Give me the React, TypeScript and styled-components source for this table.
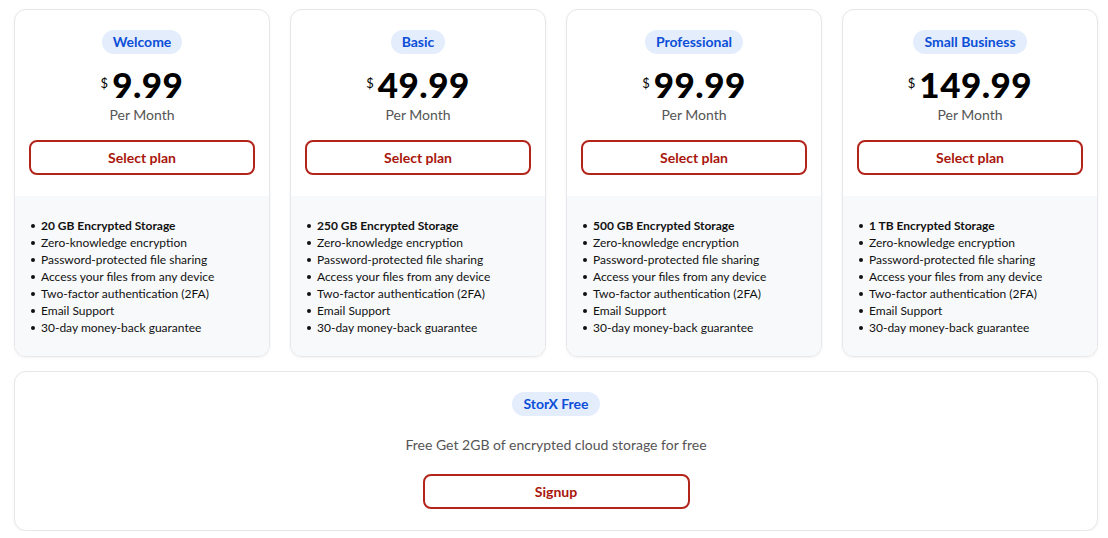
import React from "react";
import styled, { createGlobalStyle } from "styled-components";

const Global = createGlobalStyle`
  html, body { margin: 0; padding: 0; background: #ffffff; }
  body { font-family: Lato, "Noto Sans", sans-serif; color: #111; }
  * { box-sizing: border-box; }
`;

const Page = styled.div`
  width: 1108px;
  padding: 9px 10px 0 14px;
  display: flex;
  flex-direction: column;
  gap: 14px;
`;

const Grid = styled.div`
  display: grid;
  grid-template-columns: repeat(4, 256px);
  gap: 20px;
`;

const Card = styled.div`
  border: 1px solid #e6e7ea;
  border-radius: 12px;
  background: #fff;
  overflow: hidden;
  box-shadow: 0 1px 3px rgba(0, 0, 0, 0.05);
  display: flex;
  flex-direction: column;
`;

const Top = styled.div`
  padding: 20px 14px 21px;
  display: flex;
  flex-direction: column;
  align-items: center;
`;

const Badge = styled.span`
  display: inline-block;
  height: 24px;
  line-height: 24px;
  padding: 0 11px;
  border-radius: 12px;
  background: #e4edfc;
  color: #0b4fd8;
  font-size: 14px;
  font-weight: 700;
`;

const Price = styled.div`
  margin-top: 10px;
  height: 40px;
  display: flex;
  align-items: center;
  justify-content: center;
  color: #000;
`;

const Dollar = styled.span`
  font-size: 13px;
  font-weight: 400;
  align-self: flex-start;
  margin-top: 11px;
  margin-right: 4px;
`;

const Amount = styled.span`
  font-size: 35px;
  font-weight: 900;
  line-height: 40px;
  letter-spacing: 0.5px;
`;

const Period = styled.div`
  margin-top: 1px;
  line-height: 20px;
  font-size: 14px;
  color: #555;
`;

const Button = styled.button<{ $w?: string; $mt?: number }>`
  width: ${(p) => p.$w || "100%"};
  height: 35px;
  margin-top: ${(p) => p.$mt ?? 15}px;
  border: 2px solid #b3251a;
  border-radius: 8px;
  background: #fff;
  color: #a8160c;
  font-family: Lato, "Noto Sans", sans-serif;
  font-size: 14px;
  font-weight: 700;
  cursor: pointer;
`;

const Features = styled.ul`
  flex: 1;
  margin: 0;
  list-style: none;
  padding: 21px 16px 20px 16px;
  background: #f8f9fb;
`;

const Feature = styled.li<{ $bold?: boolean }>`
  position: relative;
  padding-left: 10px;
  font-size: 12px;
  line-height: 17px;
  color: #111;
  font-weight: ${(p) => (p.$bold ? 700 : 400)};
  &::before {
    content: "";
    position: absolute;
    left: 0;
    top: 7px;
    width: 4px;
    height: 4px;
    border-radius: 50%;
    background: #111;
  }
`;

const FreeCard = styled(Card)`
  align-items: center;
  padding: 20px 0 21px;
`;

const FreeText = styled.div`
  margin-top: 19px;
  line-height: 20px;
  font-size: 14px;
  color: #555;
`;

const plans = [
  { name: "Welcome", price: "9.99", storage: "20 GB" },
  { name: "Basic", price: "49.99", storage: "250 GB" },
  { name: "Professional", price: "99.99", storage: "500 GB" },
  { name: "Small Business", price: "149.99", storage: "1 TB" },
];

const rest = [
  "Zero-knowledge encryption",
  "Password-protected file sharing",
  "Access your files from any device",
  "Two-factor authentication (2FA)",
  "Email Support",
  "30-day money-back guarantee",
];

export default function App() {
  return (
    <>
      <Global />
      <Page>
        <Grid>
          {plans.map((p) => (
            <Card key={p.name}>
              <Top>
                <Badge>{p.name}</Badge>
                <Price>
                  <Dollar>$</Dollar>
                  <Amount>{p.price}</Amount>
                </Price>
                <Period>Per Month</Period>
                <Button>Select plan</Button>
              </Top>
              <Features>
                <Feature $bold>{p.storage} Encrypted Storage</Feature>
                {rest.map((r) => (
                  <Feature key={r}>{r}</Feature>
                ))}
              </Features>
            </Card>
          ))}
        </Grid>
        <FreeCard>
          <Badge>StorX Free</Badge>
          <FreeText>Free Get 2GB of encrypted cloud storage for free</FreeText>
          <Button $w="267px" $mt={19}>Signup</Button>
        </FreeCard>
      </Page>
    </>
  );
}
